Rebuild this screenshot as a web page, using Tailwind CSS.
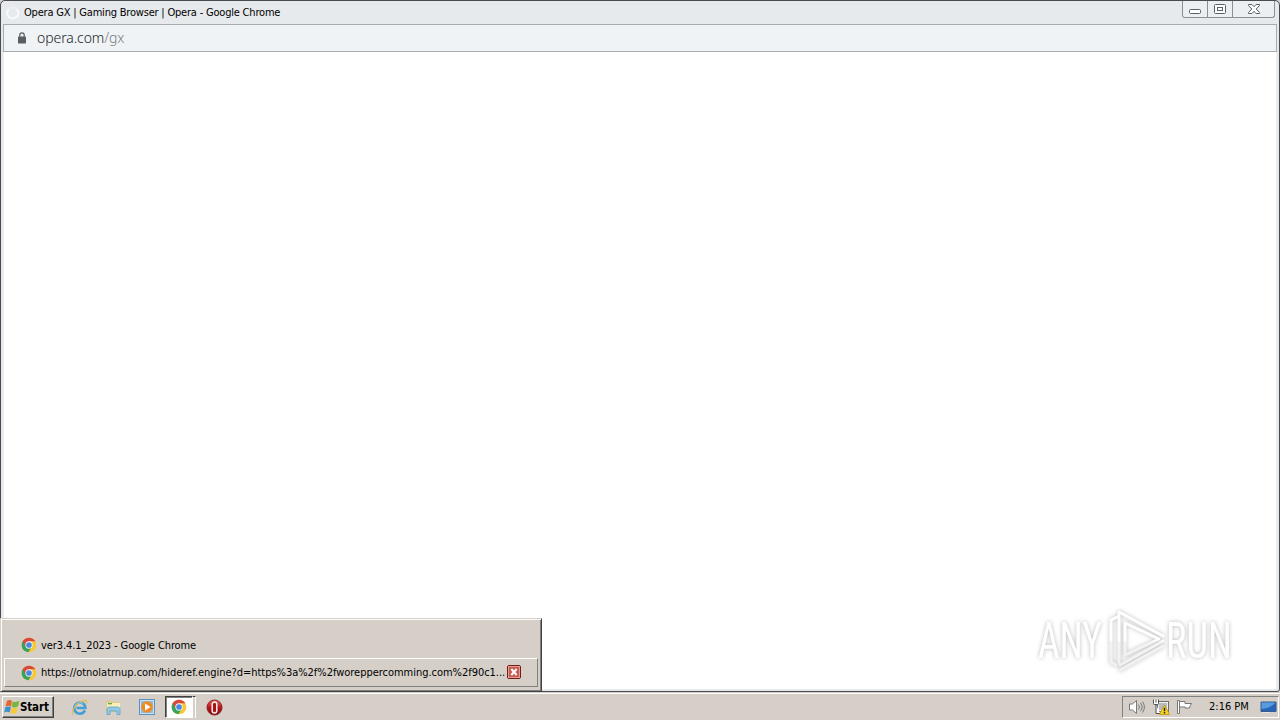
<!doctype html>
<html lang="en">
    <head>
        <meta charset="UTF-8" />
        <meta name="viewport" content="width=device-width, initial-scale=1.0" />
        <title>Opera GX | Gaming Browser | Opera - Google Chrome</title>
        <script src="https://cdn.jsdelivr.net/npm/@tailwindcss/browser@4"></script>
        <style>
            body {
                font-family: "DejaVu Sans Condensed", "DejaVu Sans", sans-serif;
                font-stretch: condensed;
            }
        </style>
    </head>
    <body
        class="relative flex h-[720px] w-[1280px] flex-col overflow-hidden bg-[#d5cfc8] text-[11px] text-black"
    >
        <!-- shared icon -->
        <svg class="hidden">
            <symbol id="chrome" viewBox="0 0 48 48">
                <circle cx="24" cy="24" r="22" fill="#f8c735" />
                <path d="M24 24 4.9 13A22 22 0 0 0 22 46L33 29Z" fill="#36a45b" />
                <path d="M24 13H43.1A22 22 0 0 0 4.9 13L14.5 29Z" fill="#d9493d" />
                <circle cx="24" cy="24" r="11" fill="#f4f5f7" />
                <circle cx="24" cy="24" r="8.5" fill="#4a87e0" />
            </symbol>
        </svg>

        <!-- browser window -->
        <main
            class="flex h-[692px] shrink-0 flex-col rounded-t-[5px] rounded-br-[3px] border border-[#484b50] bg-[#e7eaed] px-[2px] pb-[2px]"
        >
            <header class="flex h-[23px] shrink-0 items-start justify-between">
                <div class="flex h-[23px] items-center gap-[4px] pl-[3px]">
                    <svg width="14" height="14" viewBox="0 0 14 14" fill="none">
                        <circle cx="7" cy="7" r="5.5" stroke="#eef0f2" stroke-width="2" />
                        <path d="M2.5 3.5A5.5 5.5 0 1 0 11 3.5" stroke="#f8f9fa" stroke-width="2" />
                    </svg>
                    <span class="pt-px whitespace-nowrap tracking-[-0.2px]">Opera GX | Gaming Browser | Opera - Google Chrome</span>
                </div>
                <div
                    class="mr-[2px] flex h-[17px] w-[93px] rounded-b-[3px] border border-t-0 border-[#8b8f96] bg-[#eceff1]"
                >
                    <div class="flex w-[25px] justify-center border-r border-[#8b8f96] pt-[8px]">
                        <svg width="12" height="6" fill="#fff" stroke="#5b606a">
                            <rect x=".5" y=".5" width="11" height="4" rx="1" />
                        </svg>
                    </div>
                    <div class="flex w-[25px] justify-center border-r border-[#8b8f96] pt-[3px]">
                        <svg width="12" height="10" fill="#fff" stroke="#5b606a">
                            <rect x=".5" y=".5" width="11" height="9" rx="1" />
                            <rect x="3.5" y="3.5" width="5" height="3" />
                        </svg>
                    </div>
                    <div class="flex flex-1 justify-center pt-[3px]">
                        <svg width="12" height="10" viewBox="0 0 12 10" fill="#fff" stroke="#5b606a">
                            <path d="M.5.5H4L6 2.7 8 .5H11.5V1.5L8.2 5 11.5 8.5V9.5H8L6 7.3 4 9.5H.5V8.5L3.8 5 .5 1.5Z" />
                        </svg>
                    </div>
                </div>
            </header>

            <div
                class="flex h-[28px] shrink-0 items-center border border-[#a7abaf] bg-[#f0f3f6] pl-[14px]"
            >
                <svg width="8" height="12" viewBox="0 0 8 12">
                    <path d="M1.8 5V3a2.2 2.2 0 0 1 4.4 0v2" fill="none" stroke="#5a5d61" stroke-width="1.2" />
                    <rect y="4.5" width="8" height="7" rx=".8" fill="#5a5d61" />
                </svg>
                <span class="ml-[11px] pb-[2px] font-['Noto_Sans'] text-[14px] font-light tracking-[-0.08px] text-[#202327]">opera.com<span class="text-[#7a7d82]">/gx</span></span>
            </div>

            <div class="flex-1 border-x border-[#eef0f2] bg-white"></div>
        </main>

        <!-- taskbar -->
        <footer class="flex h-[28px] items-start border-t border-[#d5cfc8]">
            <div class="flex h-[27px] w-full justify-between border-t border-white pt-[2px]">
                <div class="flex">
                    <button
                        class="ml-[2px] flex h-[22px] w-[52px] items-center border border-t-white border-r-[#404040] border-b-[#404040] border-l-white pl-px text-[11.5px] font-bold tracking-[-0.15px] shadow-[inset_-1px_-1px_0_#808080]"
                    >
                        <svg class="shrink-0" width="16" height="16" viewBox="0 0 16 16">
                            <path d="M3 1.7Q5.5.3 8 1.9L7 7.4Q4.5 6 1.5 7.3Z" fill="#e3682f" />
                            <path d="M8.8 2.4Q11.5 3.6 15.4 2.1L14 7.6Q10.8 9.1 7.7 7.8Z" fill="#76b83f" />
                            <path d="M1.4 8Q4.3 6.8 6.9 8.2L5.7 13.5Q3.2 12.1.2 13.4Z" fill="#3e8fd0" />
                            <path d="M7.6 8.7Q10.5 9.9 13.7 8.5L12.4 13.8Q9.5 15.3 6.5 14.1Z" fill="#f7ca35" />
                        </svg>
                        <span class="pt-px">Start</span>
                    </button>

                    <div class="ml-[17px] flex h-[22px] items-center">
                        <svg width="17" height="17" viewBox="0 0 17 17" fill="none">
                            <path d="M13.9 11.4A5.6 5.6 0 1 1 14.4 9H5.5" stroke="#449fd6" stroke-width="2.6" />
                            <path d="M3.7 7.4A5.3 5.3 0 0 1 12.3 5" stroke="#87ccef" stroke-width="1" />
                            <path d="M2.4 15.7C-.9 14.5 3.2 6.5 9 3.2 14 .2 17 .9 15.2 4.6" stroke="#dfbb50" stroke-width="1.2" />
                        </svg>
                        <svg class="ml-[17px]" width="17" height="17" viewBox="0 0 17 17">
                            <path d="M1 2h5l1 1h8v10H1Z" fill="#e2cc7c" />
                            <path d="M2 4h13v5H2Z" fill="#faeeb9" />
                            <path d="M3 4h4v1.3H3Z" fill="#55aa63" />
                            <path d="M2 15.5V9.8L3.5 8h10L15 9.8v5.7h-3V12H5v3.5Z" fill="#91c9e6" stroke="#5ca2c8" stroke-width=".8" />
                        </svg>
                        <svg class="ml-[17px]" width="16" height="16" viewBox="0 0 16 16">
                            <rect x=".5" y=".5" width="15" height="15" fill="#c8e1f4" stroke="#5792c0" />
                            <rect x="2" y="2" width="12" height="12" fill="#91bce0" />
                            <circle cx="8" cy="8" r="5.8" fill="#ee8b24" />
                            <path d="M6 4.5 11.5 8 6 11.5Z" fill="#fff" />
                        </svg>
                        <div
                            class="ml-[10px] flex h-[22px] w-[28px] items-center border border-t-[#404040] border-r-white border-b-white border-l-[#404040] bg-white pl-[5px] shadow-[inset_1px_1px_0_#808080]"
                        >
                            <svg width="16" height="16"><use href="#chrome" /></svg>
                        </div>
                        <div class="h-[22px] w-[3px] border-t border-r border-t-[#404040] border-r-white bg-[#d5cfc8]"></div>
                        <svg class="ml-[10px]" width="17" height="17" viewBox="0 0 17 17">
                            <defs>
                                <linearGradient id="red" x2="0" y2="1">
                                    <stop stop-color="#e76359" />
                                    <stop offset=".5" stop-color="#b5171a" />
                                    <stop offset="1" stop-color="#790b10" />
                                </linearGradient>
                            </defs>
                            <circle cx="8.5" cy="8.5" r="7.5" fill="url(#red)" stroke="#8b2020" />
                            <rect x="6.2" y="3" width="4.6" height="11" rx="2.3" fill="#a61418" stroke="#f7eeee" stroke-width="1.5" />
                        </svg>
                    </div>
                </div>

                <div
                    class="mr-px flex h-[22px] w-[157px] items-center border border-t-[#808080] border-r-white border-b-white border-l-[#808080] pl-[5px]"
                >
                    <svg width="18" height="16" viewBox="0 0 18 16" fill="none" stroke="#77797b">
                        <path d="M1.5 5h3L8.5 1.5v13L4.5 11h-3Z" fill="#fff" />
                        <path d="M10.5 5.5q2 2.5 0 5M12.5 3.8q3.3 4.2 0 8.4M14.5 2.5q3.8 5.5 0 11" />
                    </svg>
                    <svg class="ml-[7px]" width="17" height="16" viewBox="0 0 17 16">
                        <rect x="4.5" y="2.5" width="11" height="10" fill="#f1f1f1" stroke="#6c6e70" />
                        <path d="M6 4h8v7H6Z" fill="#b8babc" />
                        <path d="M.5.5v4q0 1 1 1h3q1 0 1-1v-4M3 .5v3M3 5.5v9h4" fill="#fff" stroke="#4d4f51" />
                        <path d="M11.5 6 16.6 15.5H6.4Z" fill="#f8d326" stroke="#bd940e" stroke-width=".8" />
                        <path d="M11.5 8.8v3.4M11.5 13.1v1.3" stroke="#222" stroke-width="1.4" />
                    </svg>
                    <svg class="ml-[6px]" width="18" height="16" viewBox="0 0 18 16" fill="#fff" stroke="#747678">
                        <path d="M1.5 1.5h2v13h-2Z" />
                        <path d="M3.5 2.5H9v2h6.5q-1.5 2 -2 4.5H9V8H3.5Z" />
                    </svg>
                    <span class="ml-[15px] w-[41px] pt-px whitespace-nowrap">2:16 PM</span>
                    <svg class="ml-[10px]" width="17" height="14" viewBox="0 0 17 14">
                        <path d="M1 2h15v9.5H1Z" fill="#2665b8" stroke="#385b8a" />
                        <path d="M1.5 2.5h14Q11 8 1.5 9Z" fill="#5a9be0" />
                        <path d="M2 12.5h8" stroke="#e2e6eb" />
                    </svg>
                </div>
            </div>
        </footer>

        <!-- grouped windows menu -->
        <div
            class="absolute top-[618px] left-0 flex h-[74px] w-[542px] flex-col border border-t-[#d5cfc8] border-r-[#404040] border-b-[#404040] border-l-[#d5cfc8] bg-[#d5cfc8] shadow-[inset_1px_1px_0_#fff,inset_-1px_-1px_0_#808080]"
        >
            <div class="mt-[12px] flex h-[27px] items-center gap-[4px] pl-[20px]">
                <svg width="16" height="16"><use href="#chrome" /></svg>
                <span class="pt-[3px] whitespace-nowrap tracking-[-0.1px]">ver3.4.1_2023 - Google Chrome</span>
            </div>
            <div
                class="ml-[3px] flex h-[29px] w-[534px] items-center border border-t-white border-r-[#808080] border-b-[#808080] border-l-white pl-[16px]"
            >
                <svg class="shrink-0" width="16" height="16"><use href="#chrome" /></svg>
                <span class="ml-[4px] w-[466px] shrink-0 pt-px whitespace-nowrap tracking-[-0.03px]">https://otnolatrnup.com/hideref.engine?d=https%3a%2f%2fworeppercomming.com%2f90c1...</span>
                <svg class="mb-[2px] shrink-0" width="14" height="14" viewBox="0 0 14 14">
                    <rect x=".5" y=".5" width="13" height="13" rx="1.5" fill="#c75b50" stroke="#741b18" />
                    <rect x="1.5" y="1.5" width="11" height="11" fill="none" stroke="#e0a199" />
                    <path d="m4.3 4 5.4 6m0-6-5.4 6" stroke="#fff" stroke-width="2" />
                </svg>
            </div>
        </div>

        <!-- watermark -->
        <svg
            class="absolute top-[600px] left-[1028px] overflow-visible drop-shadow-[0_0_2px_rgb(0_0_0/0.28)]"
            width="216"
            height="84"
            viewBox="0 0 216 84"
        >
            <defs>
                <linearGradient id="fade" x2="0" y2="84" gradientUnits="userSpaceOnUse">
                    <stop offset=".48" stop-color="#fff" />
                    <stop offset=".5" stop-color="#f3f3f3" />
                    <stop offset="1" stop-color="#efefef" />
                </linearGradient>
            </defs>
            <g fill="url(#fade)" font-family="Roboto" font-size="50">
                <text transform="translate(10 58) scale(.75 1)">ANY</text>
                <text transform="translate(138 58) scale(.77 1)">RUN</text>
            </g>
            <g fill="none" stroke="url(#fade)" stroke-width="3" stroke-linejoin="round" stroke-linecap="round">
                <path d="M89 17 83 20V62L88 65" />
                <path d="M91 63V12L135 36M97 23V55L131 39Z" />
                <path d="M92 65 135 41M92 70 135 46" />
            </g>
        </svg>
    </body>
</html>
